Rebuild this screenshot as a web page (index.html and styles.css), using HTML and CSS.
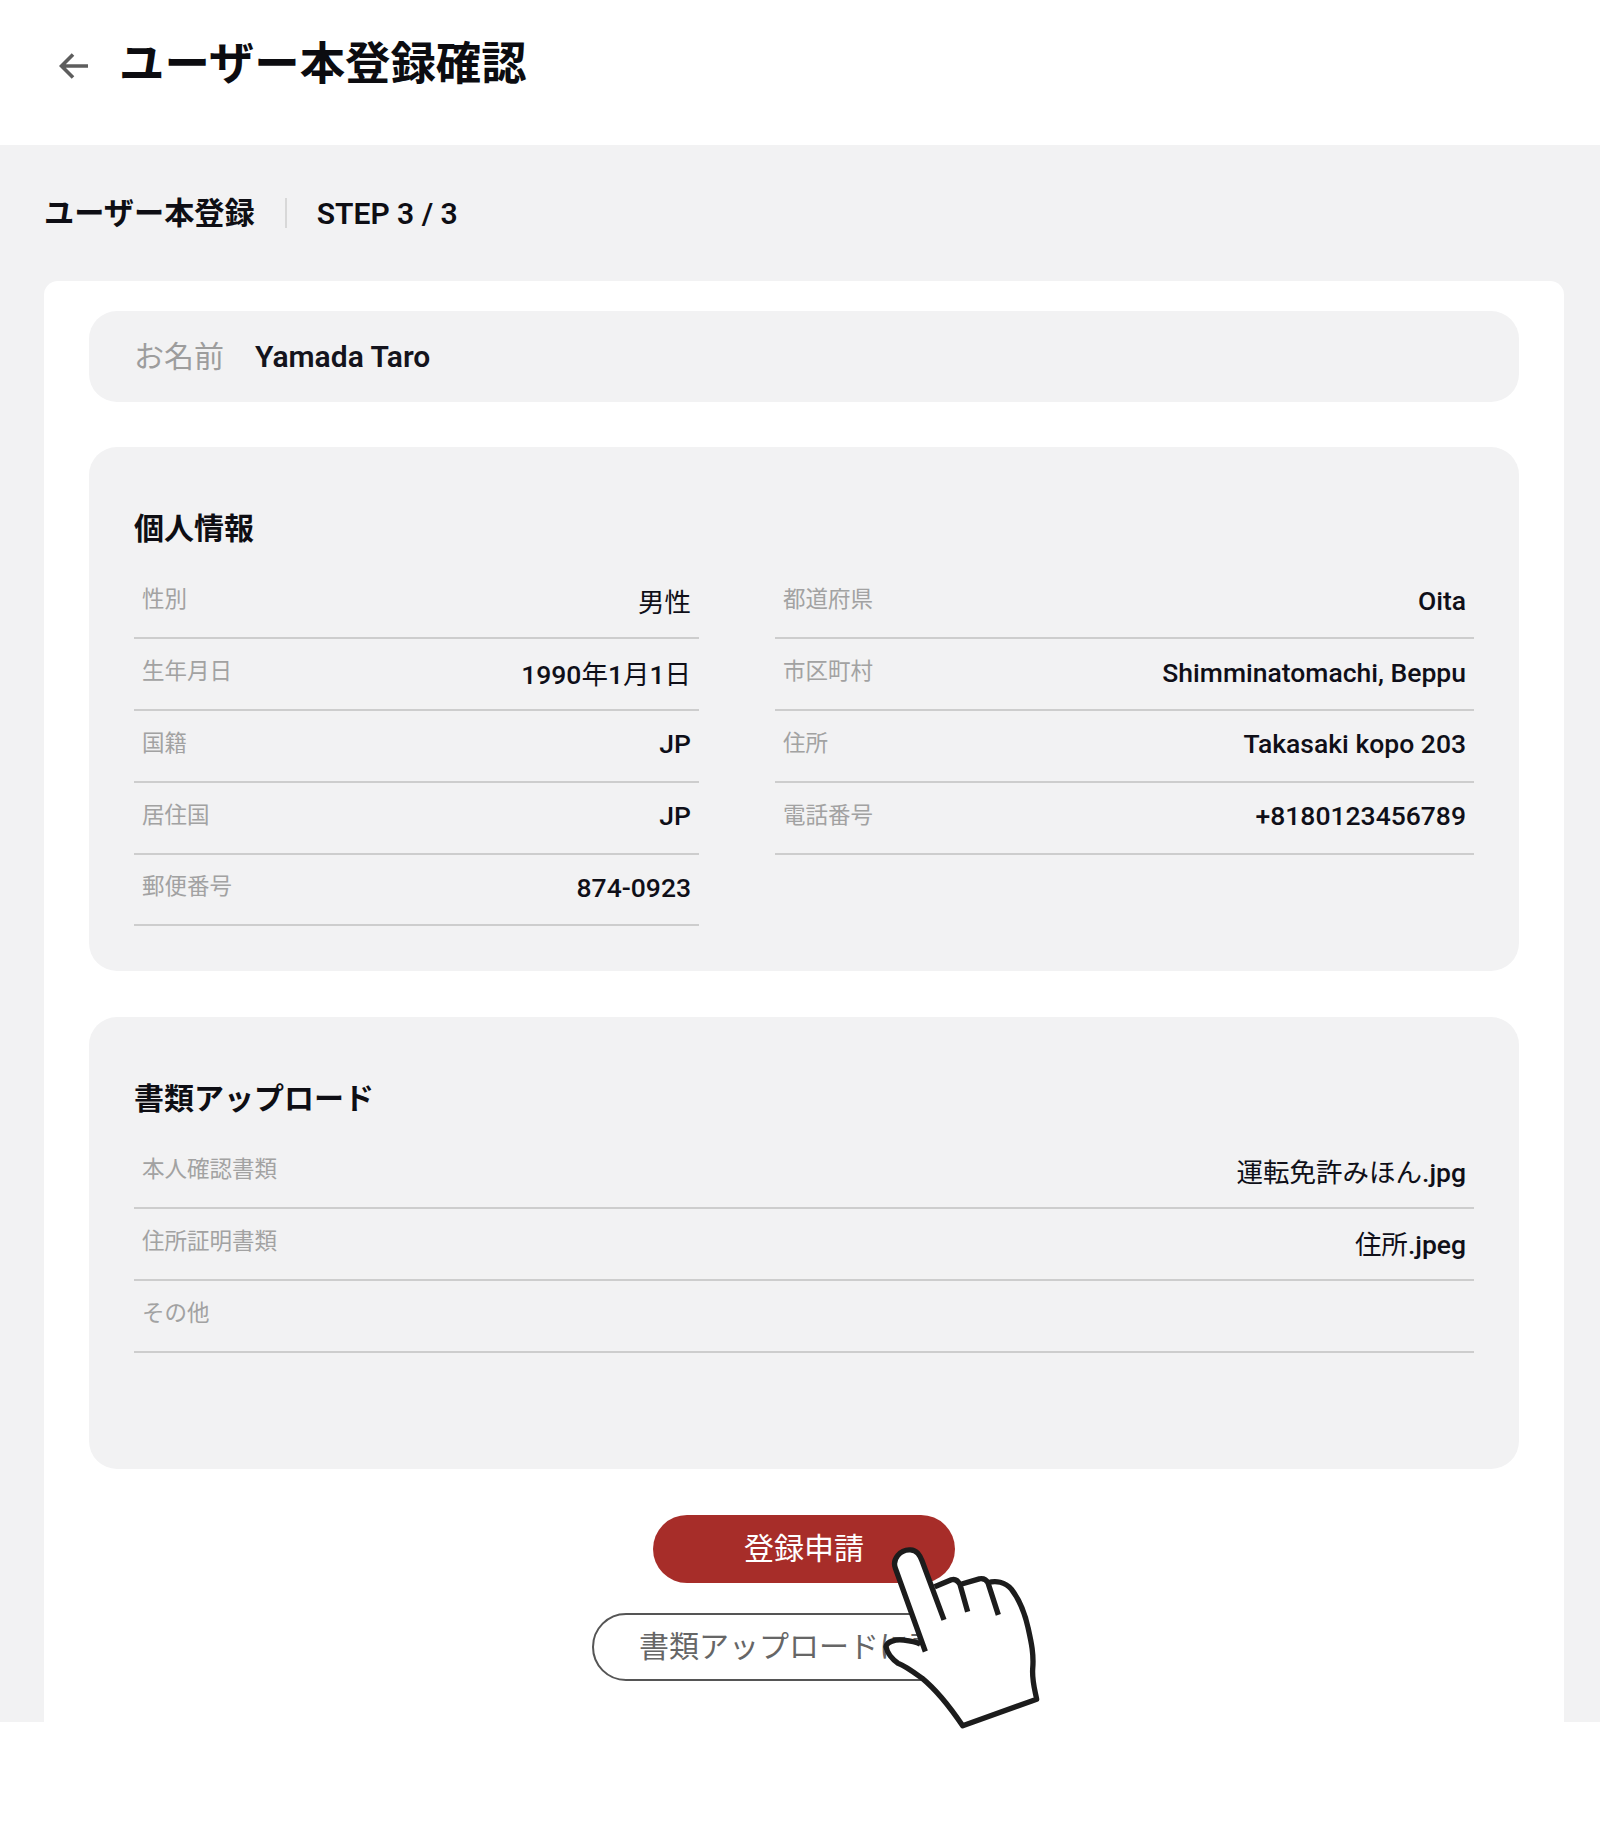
FILE: index.html
```html
<!DOCTYPE html>
<html lang="ja">
<head>
<meta charset="utf-8">
<title>ユーザー本登録確認</title>
<link rel="stylesheet" href="styles.css">
</head>
<body>
<header class="topbar">
  <svg class="back" viewBox="0 0 29 26" aria-hidden="true"><path d="M29 13H3M14 1.5 2.5 13 14 24.5"/></svg>
  <h1 class="page-title">ユーザー本登録確認</h1>
</header>
<main class="main">
  <div class="steps">
    <span class="steps-name">ユーザー本登録</span>
    <span class="steps-sep"></span>
    <span class="steps-count">STEP 3 / 3</span>
  </div>
  <div class="card">
    <div class="name-panel">
      <span class="name-label">お名前</span>
      <span class="name-value">Yamada Taro</span>
    </div>
    <section class="panel panel-info">
      <h2 class="panel-title">個人情報</h2>
      <div class="cols">
        <div class="col">
          <div class="row"><span class="label">性別</span><span class="value"><span class="jp">男性</span></span></div>
          <div class="row"><span class="label">生年月日</span><span class="value">1990<span class="jp">年</span>1<span class="jp">月</span>1<span class="jp">日</span></span></div>
          <div class="row"><span class="label">国籍</span><span class="value">JP</span></div>
          <div class="row"><span class="label">居住国</span><span class="value">JP</span></div>
          <div class="row"><span class="label">郵便番号</span><span class="value">874-0923</span></div>
        </div>
        <div class="col">
          <div class="row"><span class="label">都道府県</span><span class="value">Oita</span></div>
          <div class="row"><span class="label">市区町村</span><span class="value">Shimminatomachi, Beppu</span></div>
          <div class="row"><span class="label">住所</span><span class="value">Takasaki kopo 203</span></div>
          <div class="row"><span class="label">電話番号</span><span class="value">+8180123456789</span></div>
        </div>
      </div>
    </section>
    <section class="panel panel-docs">
      <h2 class="panel-title">書類アップロード</h2>
      <div class="row"><span class="label">本人確認書類</span><span class="value"><span class="jp">運転免許みほん</span>.jpg</span></div>
      <div class="row"><span class="label">住所証明書類</span><span class="value"><span class="jp">住所</span>.jpeg</span></div>
      <div class="row"><span class="label">その他</span><span class="value"></span></div>
    </section>
    <div class="actions">
      <button class="btn btn-primary" type="button">登録申請</button>
      <button class="btn btn-outline" type="button">書類アップロードに戻る</button>
      <svg class="hand" viewBox="970 190 480 560" aria-hidden="true">
        <path class="hand-fill" d="M1010 262C1000 235 1025 205 1055 207C1075 208 1083 222 1090 240L1128 318L1178 297C1190 293 1198 300 1204 311L1262 294C1275 292 1284 298 1288 306C1310 298 1340 303 1358 325C1385 360 1398 395 1408 440C1418 485 1426 520 1422 565C1420 600 1428 625 1434 655L1212 735C1175 680 1130 625 1090 592C1060 570 1040 555 1018 547C1000 535 985 515 982 498C985 482 1010 475 1035 478C1055 480 1070 482 1085 490L1070 440Z"/>
        <path class="hand-line" d="M1010 262C1000 235 1025 205 1055 207C1075 208 1083 222 1090 240L1156 417M1010 262 1100 512M1128 318 1178 297C1190 293 1198 300 1204 311L1227 393M1204 311 1262 294C1275 292 1284 298 1288 306L1319 402M1288 306C1310 298 1340 303 1358 325C1385 360 1398 395 1408 440C1418 485 1426 520 1422 565C1420 600 1428 625 1434 655L1212 735C1175 680 1130 625 1090 592C1060 570 1040 555 1018 547C1000 535 985 515 982 498C985 482 1010 475 1035 478C1055 480 1070 482 1085 490"/>
      </svg>
    </div>
  </div>
</main>
</body>
</html>
```
FILE: styles.css
```css
* { box-sizing: border-box; }
html, body { margin: 0; padding: 0; }
body {
  background: #fff;
  height: 1845px;
  font-family: Roboto, "Noto Sans CJK JP", sans-serif;
  color: #14141c;
}
.topbar {
  height: 145px;
  padding-left: 59px;
  display: flex;
  align-items: center;
  gap: 31px;
  padding-bottom: 15px;
}
.back {
  width: 29px;
  height: 26px;
  flex: none;
  margin-top: 1px;
  fill: none;
  stroke: #5d5d5d;
  stroke-width: 3.6;
}
.page-title {
  margin: 0;
  font-size: 45.4px;
  line-height: 56px;
  font-weight: 700;
  color: #0c0c10;
}
.main {
  background: #f2f2f3;
  padding: 0 36px 0 44px;
  height: 1577px;
}
.steps {
  height: 136px;
  display: flex;
  align-items: center;
  font-size: 30px;
  font-weight: 600;
  color: #0e0e14;
}
.steps-name { font-size: 30.2px; font-weight: 700; margin-bottom: 4px; }
.steps-sep {
  width: 2px;
  height: 30px;
  background: #d8d8d8;
  margin: 0 30px 0 30px;
}
.card {
  background: #fff;
  border-radius: 14px 14px 0 0;
  height: 1441px;
  padding: 30px 45px 0;
}
.name-panel {
  background: #f2f2f3;
  border-radius: 28px;
  height: 91px;
  padding: 0 45px;
  display: flex;
  align-items: center;
  gap: 31px;
}
.name-label {
  font-size: 30px;
  color: #9d9d9d;
  margin-bottom: 5px;
}
.name-value {
  font-size: 30px;
  font-weight: 600;
}
.panel {
  background: #f2f2f3;
  border-radius: 28px;
  margin-top: 45px;
  padding: 46px 45px 0;
}
.panel-info { height: 524px; }
.panel-docs { height: 452px; margin-top: 46px; }
.panel-title {
  margin: 0;
  height: 74.4px;
  font-size: 30px;
  line-height: 72px;
  font-weight: 700;
  color: #0e0e14;
}
.cols {
  display: grid;
  grid-template-columns: 565px 699px;
  column-gap: 76px;
}
.row {
  height: 71.8px;
  padding: 0 8px;
  border-bottom: 2px solid #cdcdcd;
  display: flex;
  justify-content: space-between;
  align-items: center;
}
.label {
  font-size: 22.5px;
  color: #a2a2a2;
  margin-bottom: 10px;
}
.value {
  font-size: 26.5px;
  font-weight: 500;
  color: #0f0f18;
  margin-bottom: 4px;
}
.jp { font-weight: 400; }
.actions {
  position: relative;
  margin-top: 46px;
  display: flex;
  flex-direction: column;
  align-items: center;
  gap: 30px;
}
.btn {
  display: block;
  font-family: Roboto, "Noto Sans CJK JP", sans-serif;
  font-size: 30px;
  line-height: 40px;
  border-radius: 34px;
  height: 68px;
  padding: 0;
}
.btn-primary {
  width: 302px;
  background: #a72d29;
  color: #fff;
  border: 0;
}
.btn-outline {
  width: 425px;
  background: #fff;
  color: #666;
  border: 2px solid #555;
}
.hand {
  position: absolute;
  left: 793px;
  top: 28px;
  width: 160px;
  height: 189px;
}
.hand-fill { fill: #fff; stroke: none; }
.hand-line {
  fill: none;
  stroke: #1c1c1c;
  stroke-width: 16;
  stroke-linejoin: round;
}
```
